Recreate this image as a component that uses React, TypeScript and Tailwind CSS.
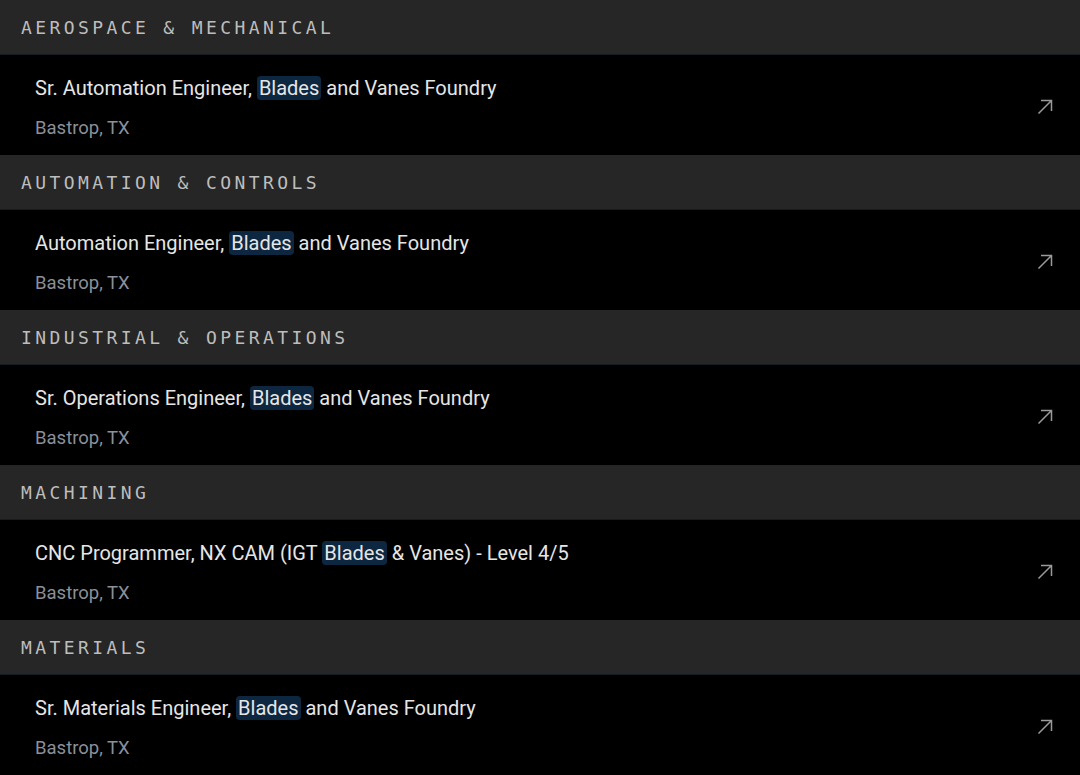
type Job = { before: string; after: string; location: string }

const sections: { title: string; job: Job }[] = [
    {
        title: 'Aerospace & Mechanical',
        job: { before: 'Sr. Automation Engineer, ', after: ' and Vanes Foundry', location: 'Bastrop, TX' },
    },
    {
        title: 'Automation & Controls',
        job: { before: 'Automation Engineer, ', after: ' and Vanes Foundry', location: 'Bastrop, TX' },
    },
    {
        title: 'Industrial & Operations',
        job: { before: 'Sr. Operations Engineer, ', after: ' and Vanes Foundry', location: 'Bastrop, TX' },
    },
    {
        title: 'Machining',
        job: { before: 'CNC Programmer, NX CAM (IGT ', after: ' & Vanes) - Level 4/5', location: 'Bastrop, TX' },
    },
    {
        title: 'Materials',
        job: { before: 'Sr. Materials Engineer, ', after: ' and Vanes Foundry', location: 'Bastrop, TX' },
    },
]

// thin outward arrow shown at the end of each posting
function OutArrow() {
    return (
        <svg width="16" height="16" viewBox="0 0 16 16" fill="none" className="text-[#9a9a9a]">
            <path d="M1.5 14.5 L14.5 1.5 M4 1.5 H14.5 V12" stroke="currentColor" strokeWidth="1.5" />
        </svg>
    )
}

function JobRow({ job }: { job: Job }) {
    return (
        <a href="#" className="flex items-center justify-between bg-black h-[100px] pl-[35px] pr-[27px] pt-[4px]">
            <div className="flex flex-col">
                <span className="text-[20px] leading-[28px] text-[#e6e6e6] font-['Roboto',sans-serif]">
                    {job.before}
                    <mark className="bg-[#0d2740] text-[#e6e6e6] rounded-[4px] px-[2px]">Blades</mark>
                    {job.after}
                </span>
                <span className="mt-[14px] text-[18.5px] leading-[24px] text-[#8b9099] font-['Roboto',sans-serif]">
                    {job.location}
                </span>
            </div>
            <OutArrow />
        </a>
    )
}

export default function App() {
    return (
        <div className="w-[1080px] min-h-[775px] bg-black">
            {sections.map((section) => (
                <section key={section.title}>
                    <h2 className="h-[55px] flex items-center px-[21px] bg-[#262626] border-b border-[#161c24] text-[18px] uppercase tracking-[3.4px] text-[#bdbdbd] font-['DejaVu_Sans_Mono',monospace]">
                        {section.title}
                    </h2>
                    <JobRow job={section.job} />
                </section>
            ))}
        </div>
    )
}
